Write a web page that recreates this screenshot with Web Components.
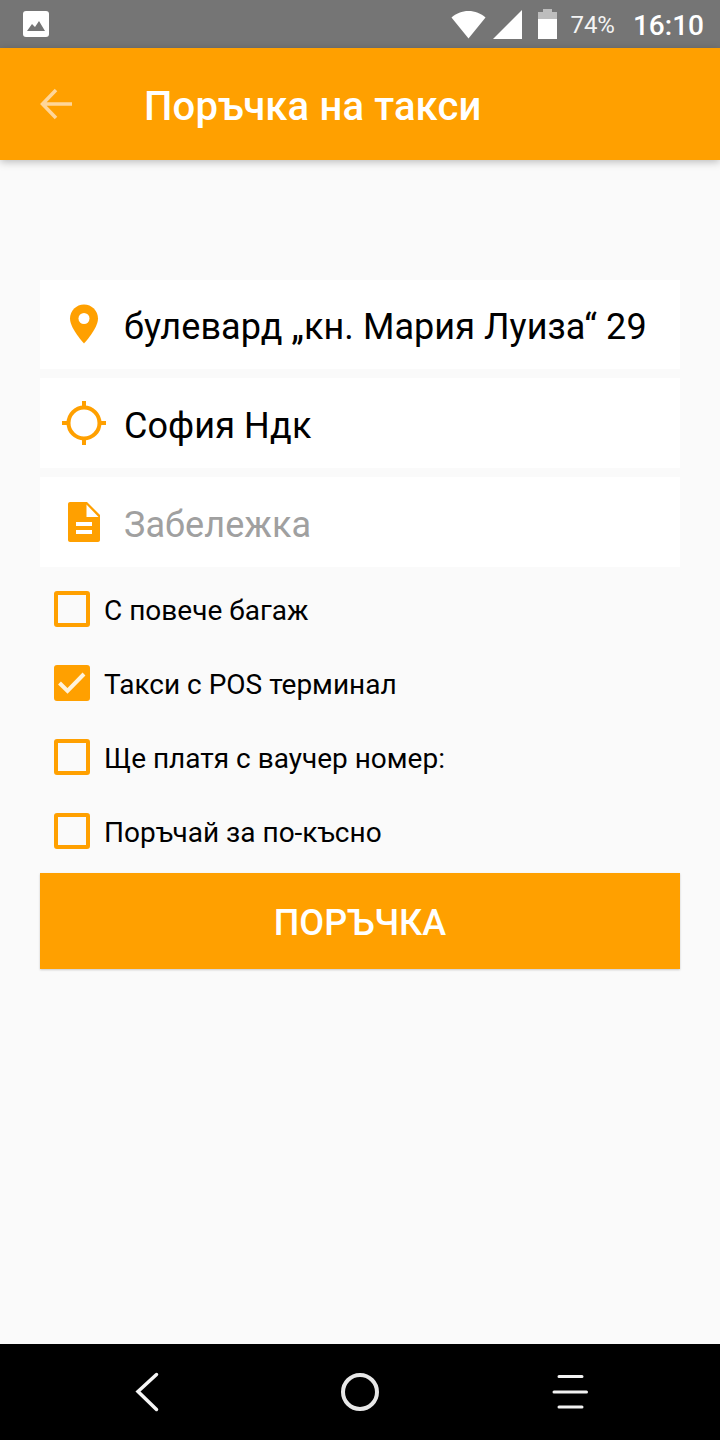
<!DOCTYPE html>
<html lang="bg">
<head>
<meta charset="utf-8">
<title>Поръчка на такси</title>
<style>
  html, body { margin: 0; height: 100%; }
  body { font-family: Roboto, "Liberation Sans", sans-serif; background: #fafafa; }
</style>
</head>
<body>
<taxi-screen>
  <status-bar slot="status"></status-bar>
  <app-bar slot="bar" title="Поръчка на такси"></app-bar>
  <order-field icon="pin" value="булевард „кн. Мария Луиза“ 29"></order-field>
  <order-field icon="target" value="София Ндк"></order-field>
  <order-field icon="note" placeholder="Забележка"></order-field>
  <check-row label="С повече багаж"></check-row>
  <check-row label="Такси с POS терминал" checked></check-row>
  <check-row label="Ще платя с ваучер номер:"></check-row>
  <check-row label="Поръчай за по-късно"></check-row>
  <order-button label="Поръчка"></order-button>
  <nav-bar slot="nav"></nav-bar>
</taxi-screen>

<script>
(function () {
const ICONS = {
  pin: `<svg width="48" height="48" viewBox="0 0 48 48"><path fill="#ffa000" d="M24 3.500c-7.700 0-14 6.300-14 14 0 10 14 25 14 25s14-15 14-25c0-7.700-6.300-14-14-14z"/><circle cx="24" cy="17.500" r="5.500" fill="#fff"/></svg>`,
  target: `<svg width="48" height="48" viewBox="0 0 48 48"><circle cx="24" cy="24" r="15.500" fill="none" stroke="#ffa000" stroke-width="4"/><path fill="none" stroke="#ffa000" stroke-width="4" d="M24 2v6M24 40v6M2 24h6M40 24h6"/></svg>`,
  note: `<svg width="48" height="48" viewBox="0 0 48 48"><path fill="#ffa000" d="M10 4h17l13 13v25c0 1.200-1 2-2 2H10c-1 0-2-.8-2-2V6c0-1.200 1-2 2-2z"/><path fill="#fff" d="M26.500 6.500V19H38.500zM16 24h16v4H16zM16 32h16v4H16z"/></svg>`
};

class TaxiScreen extends HTMLElement {
  constructor() {
    super();
    this.attachShadow({ mode: 'open' });
    this.shadowRoot.innerHTML = `
      <style>
        :host { display: flex; flex-direction: column; height: 1440px; background: #fafafa; }
        .form { flex: 1; display: flex; flex-direction: column; padding: 120px 40px 0; }
      </style>
      <slot name="status"></slot>
      <slot name="bar"></slot>
      <div class="form"><slot></slot></div>
      <slot name="nav"></slot>`;
  }
}

class StatusBar extends HTMLElement {
  constructor() {
    super();
    this.attachShadow({ mode: 'open' });
    this.shadowRoot.innerHTML = `
      <style>
        :host { display: flex; align-items: center; height: 48px; background: #757575; color: #fff; padding: 0 16px 0 23px; }
        svg { display: block; }
        .right { margin-left: auto; display: flex; align-items: center; }
        .signal { margin-left: 7px; }
        .battery { margin-left: 16px; }
        .pct { font-size: 24px; margin-left: 13px; color: #f4f4f4; padding-top: 2px; }
        .time { font-size: 28px; font-weight: 500; margin-left: 18px; padding-top: 2px; }
      </style>
      <svg width="26" height="26" viewBox="0 0 26 26"><rect width="26" height="26" rx="3" fill="#fff"/><path fill="#757575" d="M4 20l5-7 3 3 4-6 6 10z"/></svg>
      <div class="right">
        <svg class="wifi" width="35" height="29" viewBox="0 0 35 29"><path fill="#fff" d="M17.500 28.500L.5 7.500C5 3.500 11 1 17.500 1S30 3.500 34.500 7.500z"/></svg>
        <svg class="signal" width="29" height="29" viewBox="0 0 29 29"><path fill="#fff" d="M0 29L29 0v29z"/></svg>
        <svg class="battery" width="19" height="30" viewBox="0 0 19 30"><path fill="#bdbdbd" d="M5 0h9v3h5v8H0V3h5z"/><path fill="#fff" d="M0 10h19v20H0z"/></svg>
        <span class="pct">74%</span>
        <span class="time">16:10</span>
      </div>`;
  }
}

class AppBar extends HTMLElement {
  constructor() {
    super();
    this.attachShadow({ mode: 'open' });
    this.shadowRoot.innerHTML = `
      <style>
        :host { display: flex; align-items: center; height: 112px; background: #ffa000; color: #fff; box-shadow: 0 2px 8px rgba(0,0,0,.25); position: relative; }
        svg { margin-left: 40px; display: block; }
        h1 { margin: 0 0 0 72px; padding-top: 4px; font-size: 40px; font-weight: 500; letter-spacing: .15px; }
      </style>
      <svg width="32" height="32" viewBox="0 0 32 32"><path fill="none" stroke="#ffd699" stroke-width="3.500" d="M33 16H3M16 2L2.500 16 16 30"/></svg>
      <h1></h1>`;
    this.shadowRoot.querySelector('h1').textContent = this.getAttribute('title');
  }
}

class OrderField extends HTMLElement {
  constructor() {
    super();
    this.attachShadow({ mode: 'open' });
    this.shadowRoot.innerHTML = `
      <style>
        :host { display: flex; align-items: center; height: 90px; margin-bottom: 9px; background: #fff; font-size: 36px; color: #000; }
        :host(:nth-of-type(1)) { height: 89px; }
        :host(:nth-of-type(3)) { margin-bottom: 5px; }
        .icon { display: flex; width: 48px; margin-left: 20px; }
        .text { margin-left: 16px; padding-top: 6px; letter-spacing: .07px; }
        :host(:nth-of-type(1)) .text { padding-top: 4px; }
        .text.hint { color: #a0a0a0; }
      </style>
      <span class="icon"></span><span class="text"></span>`;
    this.shadowRoot.querySelector('.icon').innerHTML = ICONS[this.getAttribute('icon')];
    const text = this.shadowRoot.querySelector('.text');
    text.textContent = this.getAttribute('value') || this.getAttribute('placeholder');
    if (!this.hasAttribute('value')) text.classList.add('hint');
  }
}

class CheckRow extends HTMLElement {
  constructor() {
    super();
    this.attachShadow({ mode: 'open' });
    this.shadowRoot.innerHTML = `
      <style>
        :host { display: flex; align-items: center; height: 74px; font-size: 28px; color: #000; }
        .box { box-sizing: border-box; width: 36px; height: 36px; margin-left: 14px; border: 4px solid #ffa000; border-radius: 3px; }
        :host([checked]) .box { background: #ffa000; }
        svg { display: none; margin: -4px; }
        :host([checked]) svg { display: block; }
        .label { margin-left: 14px; padding-top: 2px; }
      </style>
      <span class="box"><svg width="36" height="36" viewBox="0 0 36 36"><path fill="none" stroke="#fff3dc" stroke-width="4" d="M5.500 18l8 8L30 9"/></svg></span>
      <span class="label"></span>`;
    this.shadowRoot.querySelector('.label').textContent = this.getAttribute('label');
  }
}

class OrderButton extends HTMLElement {
  constructor() {
    super();
    this.attachShadow({ mode: 'open' });
    this.shadowRoot.innerHTML = `
      <style>
        :host { display: flex; align-items: center; justify-content: center; height: 96px; margin-top: 5px; background: #ffa000; color: #fff; font-size: 36px; font-weight: 500; text-transform: uppercase; box-shadow: 0 1px 2px rgba(0,0,0,.2); }
        span { padding-top: 4px; }
      </style>
      <span></span>`;
    this.shadowRoot.querySelector('span').textContent = this.getAttribute('label');
  }
}

class NavBar extends HTMLElement {
  constructor() {
    super();
    this.attachShadow({ mode: 'open' });
    this.shadowRoot.innerHTML = `
      <style>
        :host { display: grid; grid-template-columns: repeat(3, 1fr); align-items: center; justify-items: center; height: 96px; background: #000; padding: 0 43px; }
        svg { display: block; }
      </style>
      <svg width="40" height="40" viewBox="0 0 40 40"><path fill="none" stroke="#f6f6f6" stroke-width="3.500" stroke-linecap="round" d="M27.500 2.500L9 19.500 27.500 37.500"/></svg>
      <svg width="40" height="40" viewBox="0 0 40 40"><circle cx="20" cy="20" r="17" fill="none" stroke="#e8e8e8" stroke-width="4"/></svg>
      <svg width="40" height="40" viewBox="0 0 40 40"><path fill="none" stroke="#f2f2f2" stroke-width="3" stroke-linecap="round" d="M8 4.500h23M3 20h32.500M8 35h23"/></svg>`;
  }
}

customElements.define('taxi-screen', TaxiScreen);
customElements.define('status-bar', StatusBar);
customElements.define('app-bar', AppBar);
customElements.define('order-field', OrderField);
customElements.define('check-row', CheckRow);
customElements.define('order-button', OrderButton);
customElements.define('nav-bar', NavBar);
})();
</script>
</body>
</html>
